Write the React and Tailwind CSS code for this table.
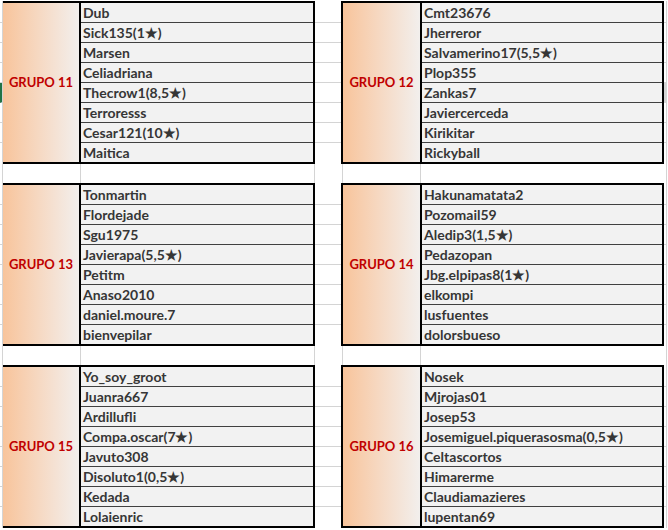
import { Fragment } from 'react'

const GROUPS = [
  [
    { num: 11, names: ['Dub', 'Sick135(1★)', 'Marsen', 'Celiadriana', 'Thecrow1(8,5★)', 'Terroresss', 'Cesar121(10★)', 'Maitica'] },
    { num: 12, names: ['Cmt23676', 'Jherreror', 'Salvamerino17(5,5★)', 'Plop355', 'Zankas7', 'Javiercerceda', 'Kirikitar', 'Rickyball'] }
  ],
  [
    { num: 13, names: ['Tonmartin', 'Flordejade', 'Sgu1975', 'Javierapa(5,5★)', 'Petitm', 'Anaso2010', 'daniel.moure.7', 'bienvepilar'] },
    { num: 14, names: ['Hakunamatata2', 'Pozomail59', 'Aledip3(1,5★)', 'Pedazopan', 'Jbg.elpipas8(1★)', 'elkompi', 'lusfuentes', 'dolorsbueso'] }
  ],
  [
    { num: 15, names: ['Yo_soy_groot', 'Juanra667', 'Ardillufli', 'Compa.oscar(7★)', 'Javuto308', 'Disoluto1(0,5★)', 'Kedada', 'Lolaienric'] },
    { num: 16, names: ['Nosek', 'Mjrojas01', 'Josep53', 'Josemiguel.piquerasosma(0,5★)', 'Celtascortos', 'Himarerme', 'Claudiamazieres', 'lupentan69'] }
  ]
]

// plain spreadsheet cells beside the blocks, rows lined up with the block rows
const SideCells = ({ className = '', mark = null }) => (
  <div className={`flex flex-col h-[163px] shrink-0 ${className}`}>
    <div className="h-[2px] shrink-0" />
    {Array.from({ length: 8 }).map((_, i) => (
      <div
        key={i}
        className={[
          'shrink-0',
          i < 7 ? 'h-[20px] border-b border-[#d4d4d4]' : 'h-[19px]',
          mark === 'left' && i === 4 ? 'border-l-2 border-l-[#217346]' : '',
          mark === 'right' && i === 4 ? 'border-2 border-r-0 border-[#217346]' : ''
        ].filter(Boolean).join(' ')}
      />
    ))}
    <div className="h-[2px] shrink-0" />
  </div>
)

const Block = ({ num, names, className = '', labelClass = '', namesClass = '' }) => (
  <div className={`flex h-[163px] shrink-0 border-y-2 border-r-2 border-black ${className}`}>
    <div className={`flex items-center justify-center bg-linear-to-r from-[#f8c49b] to-[#f2efed] text-[13px] font-bold text-[#c00000] ${labelClass}`}>
      GRUPO {num}
    </div>
    <div className={`flex flex-col border-l-2 border-black bg-[#f2f2f2] ${namesClass}`}>
      {names.map((name, i) => (
        <div
          key={i}
          className={`flex items-center px-[2px] pt-[1px] text-[14px] font-bold leading-none whitespace-nowrap text-[#363636] ${
            i < names.length - 1 ? 'h-[20px] border-b border-[#404040]' : 'h-[19px]'
          }`}
        >
          {name}
        </div>
      ))}
    </div>
  </div>
)

const GapRow = () => (
  <div className="flex h-[19px]">
    <div className="w-[3px] border-r border-[#d4d4d4]" />
    <div className="w-[78px] border-r border-[#d4d4d4]" />
    <div className="w-[234px] border-r border-[#d4d4d4]" />
    <div className="w-[28px] border-r border-[#d4d4d4]" />
    <div className="w-[78px] border-r border-[#d4d4d4]" />
    <div className="w-[246px] border-r border-[#d4d4d4]" />
  </div>
)

export default function App() {
  return (
    <div className="w-[668px] h-[530px] overflow-hidden bg-white pt-[1px] font-[Lato,sans-serif]">
      {GROUPS.map(([left, right], r) => (
        <Fragment key={r}>
          <div className="flex">
            <SideCells className="w-[3px] border-r border-[#d4d4d4]" mark={r === 0 ? 'left' : null} />
            <Block {...left} labelClass="w-[76px]" namesClass="w-[234px]" />
            <SideCells className="w-[26px]" />
            <Block {...right} className="border-l-2" labelClass="w-[77px]" namesClass="w-[242px]" />
            <SideCells className="w-[3px] border-r border-[#d4d4d4]" mark={r === 0 ? 'right' : null} />
          </div>
          {r < 2 && <GapRow />}
        </Fragment>
      ))}
    </div>
  )
}
